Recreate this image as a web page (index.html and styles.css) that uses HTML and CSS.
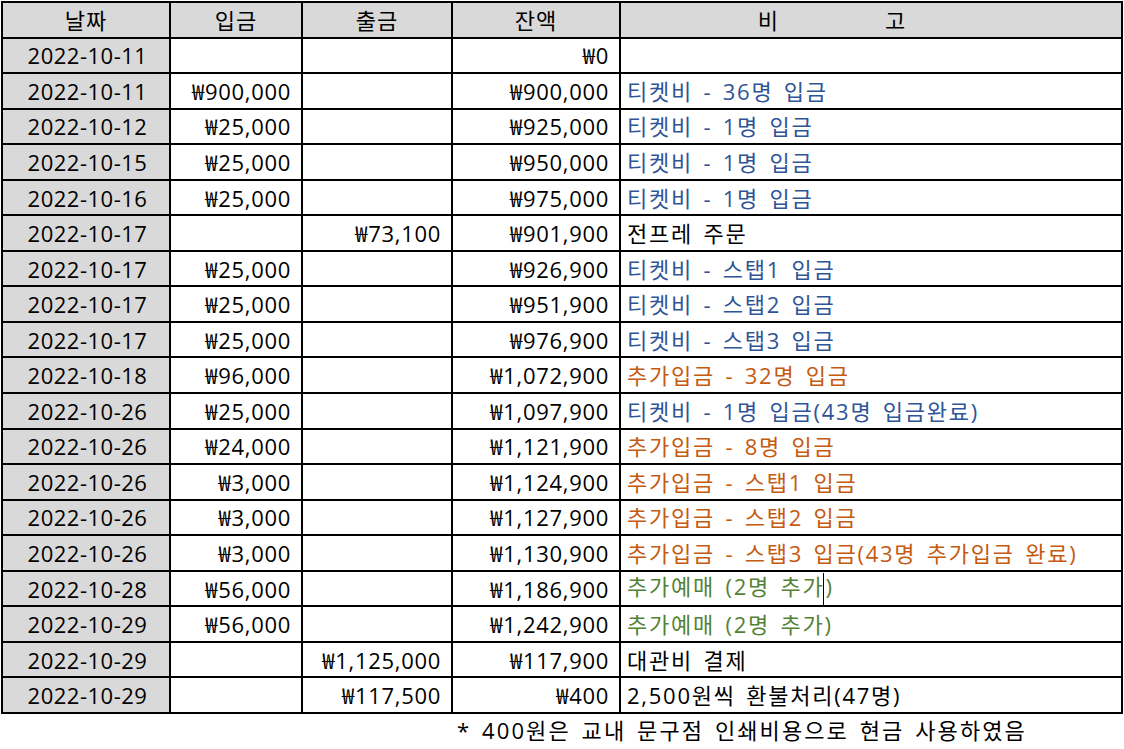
FILE: index.html
```html
<!DOCTYPE html>
<html lang="ko">
<head>
<meta charset="utf-8">
<title>입출금 내역</title>
<link rel="stylesheet" href="styles.css">
</head>
<body>
<div class="sheet">
<table class="ledger">
<colgroup>
<col class="c-date"><col class="c-in"><col class="c-out"><col class="c-bal"><col class="c-note">
</colgroup>
<thead>
<tr><th>날짜</th><th>입금</th><th>출금</th><th>잔액</th><th class="note-h"><span>비</span><span class="gap"></span><span>고</span></th></tr>
</thead>
<tbody>
<tr><td class="date">2022-10-11</td><td class="num"></td><td class="num"></td><td class="num">₩0</td><td class="note"></td></tr>
<tr><td class="date">2022-10-11</td><td class="num">₩900,000</td><td class="num"></td><td class="num">₩900,000</td><td class="note blue">티켓비 - 36명 입금</td></tr>
<tr><td class="date">2022-10-12</td><td class="num">₩25,000</td><td class="num"></td><td class="num">₩925,000</td><td class="note blue">티켓비 - 1명 입금</td></tr>
<tr><td class="date">2022-10-15</td><td class="num">₩25,000</td><td class="num"></td><td class="num">₩950,000</td><td class="note blue">티켓비 - 1명 입금</td></tr>
<tr><td class="date">2022-10-16</td><td class="num">₩25,000</td><td class="num"></td><td class="num">₩975,000</td><td class="note blue">티켓비 - 1명 입금</td></tr>
<tr><td class="date">2022-10-17</td><td class="num"></td><td class="num">₩73,100</td><td class="num">₩901,900</td><td class="note">전프레 주문</td></tr>
<tr><td class="date">2022-10-17</td><td class="num">₩25,000</td><td class="num"></td><td class="num">₩926,900</td><td class="note blue">티켓비 - 스탭1 입금</td></tr>
<tr><td class="date">2022-10-17</td><td class="num">₩25,000</td><td class="num"></td><td class="num">₩951,900</td><td class="note blue">티켓비 - 스탭2 입금</td></tr>
<tr><td class="date">2022-10-17</td><td class="num">₩25,000</td><td class="num"></td><td class="num">₩976,900</td><td class="note blue">티켓비 - 스탭3 입금</td></tr>
<tr><td class="date">2022-10-18</td><td class="num">₩96,000</td><td class="num"></td><td class="num">₩1,072,900</td><td class="note orange">추가입금 - 32명 입금</td></tr>
<tr><td class="date">2022-10-26</td><td class="num">₩25,000</td><td class="num"></td><td class="num">₩1,097,900</td><td class="note blue">티켓비 - 1명 입금(43명 입금완료)</td></tr>
<tr><td class="date">2022-10-26</td><td class="num">₩24,000</td><td class="num"></td><td class="num">₩1,121,900</td><td class="note orange">추가입금 - 8명 입금</td></tr>
<tr><td class="date">2022-10-26</td><td class="num">₩3,000</td><td class="num"></td><td class="num">₩1,124,900</td><td class="note orange">추가입금 - 스탭1 입금</td></tr>
<tr><td class="date">2022-10-26</td><td class="num">₩3,000</td><td class="num"></td><td class="num">₩1,127,900</td><td class="note orange">추가입금 - 스탭2 입금</td></tr>
<tr><td class="date">2022-10-26</td><td class="num">₩3,000</td><td class="num"></td><td class="num">₩1,130,900</td><td class="note orange">추가입금 - 스탭3 입금(43명 추가입금 완료)</td></tr>
<tr><td class="date">2022-10-28</td><td class="num">₩56,000</td><td class="num"></td><td class="num">₩1,186,900</td><td class="note green">추가예매 (2명 추가<span class="caret"></span>)</td></tr>
<tr><td class="date">2022-10-29</td><td class="num">₩56,000</td><td class="num"></td><td class="num">₩1,242,900</td><td class="note green">추가예매 (2명 추가)</td></tr>
<tr><td class="date">2022-10-29</td><td class="num"></td><td class="num">₩1,125,000</td><td class="num">₩117,900</td><td class="note">대관비 결제</td></tr>
<tr><td class="date">2022-10-29</td><td class="num"></td><td class="num">₩117,500</td><td class="num">₩400</td><td class="note">2,500원씩 환불처리(47명)</td></tr>
</tbody>
</table>
<p class="footnote">* 400원은 교내 문구점 인쇄비용으로 현금 사용하였음</p>
</div>
</body>
</html>
```

FILE: styles.css
```css
html, body {
  margin: 0;
  padding: 0;
  background: #ffffff;
}
body {
  font-family: "Open Sans", "Noto Sans CJK KR", sans-serif;
  color: #000000;
}
.sheet {
  padding: 1px 0 0 1px;
}
.ledger {
  border-collapse: collapse;
  table-layout: fixed;
  width: 1122px;
  border: 2px solid #000;
  font-size: 22px;
  line-height: 1;
}
.c-date { width: 168px; }
.c-in { width: 132px; }
.c-out { width: 150px; }
.c-bal { width: 168px; }
.c-note { width: 502px; }

.ledger tr {
  height: 35.55px;
}
.ledger th,
.ledger td {
  border: 2px solid #000;
  padding: 0;
  white-space: nowrap;
  overflow: visible;
  vertical-align: middle;
}
.ledger th {
  background: #d9d9d9;
  font-weight: normal;
  text-align: center;
  letter-spacing: 1px;
}
.ledger th.note-h {
  padding-right: 78px;
}
.note-h .gap {
  display: inline-block;
  width: 106px;
}
.ledger td.date {
  background: #d9d9d9;
  text-align: center;
  padding-left: 3px;
  letter-spacing: 0.5px;
}
.ledger td.num {
  text-align: right;
  padding-right: 10px;
  letter-spacing: 0.7px;
}
.ledger td.note {
  text-align: left;
  padding-left: 6px;
  letter-spacing: 1.75px;
  word-spacing: 3px;
}
.blue { color: #2f5597; }
.orange { color: #c55a11; }
.green { color: #548235; }
.caret {
  display: inline-block;
  width: 1px;
  height: 32px;
  background: #000;
  vertical-align: middle;
  margin: 0 1px 0 -1px;
}
.footnote {
  margin: 2px 0 0 456px;
  font-size: 22px;
  line-height: 28px;
  letter-spacing: 2.1px;
  word-spacing: 3px;
}
```
